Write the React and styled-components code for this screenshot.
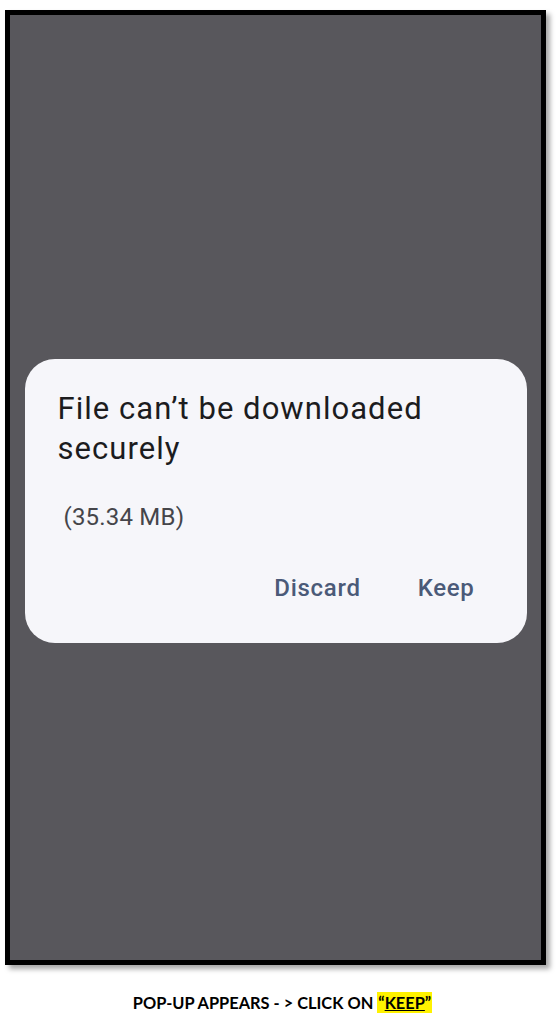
import React from 'react';
import styled, { createGlobalStyle } from 'styled-components';

const GlobalStyle = createGlobalStyle`
  html, body {
    margin: 0;
    padding: 0;
    background: #ffffff;
  }
  body {
    font-family: Roboto, "Noto Sans", sans-serif;
  }
`;

const Page = styled.div`
  width: 560px;
  height: 1024px;
  display: flex;
  flex-direction: column;
  box-sizing: border-box;
  padding: 10px 0 0 5px;
`;

const PhoneFrame = styled.div`
  width: 541px;
  height: 955px;
  box-sizing: border-box;
  border: 5px solid #000;
  background: #58575c;
  box-shadow: 4px 4px 5px rgba(0, 0, 0, 0.35);
  display: flex;
  flex-direction: column;
  align-items: center;
  padding-top: 344px;
`;

const Dialog = styled.div`
  width: 502px;
  height: 284px;
  box-sizing: border-box;
  background: #f6f6fa;
  border-radius: 30px;
  padding: 30px 33px 0 33px;
  display: flex;
  flex-direction: column;
`;

const Title = styled.h2`
  margin: 0;
  font-family: Roboto, "Noto Sans", sans-serif;
  font-weight: 400;
  font-size: 31px;
  letter-spacing: 1.05px;
  line-height: 40px;
  color: #1c1c1e;
`;

const Size = styled.p`
  margin: 34px 0 0 6px;
  font-family: Roboto, "Noto Sans", sans-serif;
  font-size: 24px;
  letter-spacing: 0.2px;
  line-height: 28px;
  color: #45454a;
`;

const Actions = styled.div`
  display: flex;
  justify-content: flex-end;
  gap: 57px;
  margin-top: 42px;
  padding-right: 19px;
`;

const ActionButton = styled.button`
  border: none;
  background: transparent;
  padding: 0;
  font-family: Roboto, "Noto Sans", sans-serif;
  font-weight: 500;
  font-size: 24px;
  letter-spacing: 0.7px;
  line-height: 30px;
  color: #4b5a78;
  cursor: pointer;
`;

const Caption = styled.p`
  margin: 27px 0 0 0;
  width: 555px;
  text-align: center;
  font-family: Lato, "Liberation Sans", sans-serif;
  font-weight: 700;
  font-size: 16.4px;
  line-height: 22px;
  color: #000;
`;

const Highlight = styled.span`
  background: #fff200;
  padding: 1px 1px;
`;

const Underlined = styled.span`
  text-decoration: underline;
`;

export default function App() {
  return (
    <>
      <GlobalStyle />
      <Page>
        <PhoneFrame>
          <Dialog>
            <Title>
              File can’t be downloaded
              <br />
              securely
            </Title>
            <Size>(35.34 MB)</Size>
            <Actions>
              <ActionButton>Discard</ActionButton>
              <ActionButton>Keep</ActionButton>
            </Actions>
          </Dialog>
        </PhoneFrame>
        <Caption>
          POP-UP APPEARS - &gt; CLICK ON{' '}
          <Highlight>
            “<Underlined>KEEP</Underlined>”
          </Highlight>
        </Caption>
      </Page>
    </>
  );
}
